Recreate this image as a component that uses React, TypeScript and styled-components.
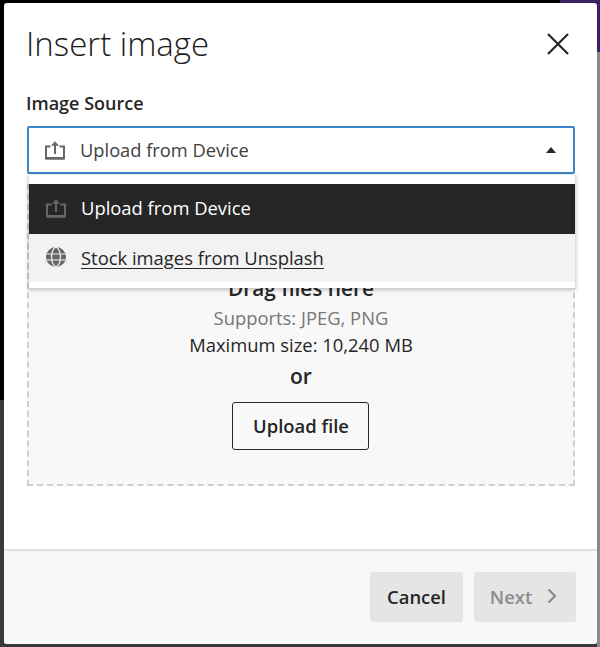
import React from "react";
import styled, { createGlobalStyle } from "styled-components";

const Global = createGlobalStyle`
  html, body { margin: 0; padding: 0; width: 600px; height: 647px; overflow: hidden; }
  body {
    font-family: "Open Sans", "Noto Sans", sans-serif;
    background:
      linear-gradient(#3d1f63, #3d1f63) 560px 0 / 40px 52px no-repeat,
      linear-gradient(#8a8a8a, #8a8a8a) 597px 52px / 3px 595px no-repeat,
      linear-gradient(#000, #000) 0 0 / 600px 400px no-repeat,
      #3a3a3a;
  }
  #root { width: 600px; height: 647px; }
`;

const Stage = styled.div`
  width: 600px;
  height: 647px;
  padding: 3px 3px 3px 4px;
  box-sizing: border-box;
`;

const Modal = styled.div`
  position: relative;
  height: 100%;
  background: #fff;
  border-radius: 3px;
  display: flex;
  flex-direction: column;
  overflow: hidden;
`;

const Header = styled.header`
  height: 80px;
  padding: 1px 26px 0 22px;
  display: flex;
  align-items: center;
  justify-content: space-between;
  box-sizing: border-box;
`;

const Title = styled.h2`
  margin: 0;
  font-size: 33px;
  line-height: 44px;
  font-weight: 300;
  color: #1c1c1c;
`;

const CloseButton = styled.button`
  width: 26px;
  height: 26px;
  border: 0;
  padding: 0;
  background: none;
  display: flex;
`;

const Body = styled.div`
  flex: 1;
  padding: 8px 22px 0 23px;
  display: flex;
  flex-direction: column;
`;

const Label = styled.label`
  font-size: 18px;
  line-height: 24px;
  font-weight: 600;
  color: #262626;
  margin: 0 0 11px -1px;
`;

const Select = styled.div`
  height: 48px;
  box-sizing: border-box;
  border: 2px solid #3d87c8;
  border-radius: 2px;
  display: flex;
  align-items: center;
  padding: 0 17px 0 15px;
  color: #404040;
  font-size: 18.3px;
`;

const SelectText = styled.span`
  margin: 0 0 2px 14px;
  flex: 1;
`;

const Caret = styled.span`
  width: 0;
  height: 0;
  border-left: 5px solid transparent;
  border-right: 5px solid transparent;
  border-bottom: 6px solid #262626;
`;

const Dropzone = styled.div`
  height: 302px;
  margin-top: 10px;
  box-sizing: border-box;
  border: 2px dashed #cfcfcf;
  background: #f8f8f8;
  display: flex;
  flex-direction: column;
  align-items: center;
  justify-content: flex-end;
  padding-bottom: 34px;
`;

const DragText = styled.div`
  font-size: 20.8px;
  line-height: 29px;
  font-weight: 600;
  color: #262626;
  margin-bottom: 1px;
`;

const Supports = styled.div`
  font-size: 18.4px;
  line-height: 27px;
  color: #767676;
`;

const MaxSize = styled.div`
  font-size: 18.4px;
  line-height: 28px;
  color: #262626;
`;

const Or = styled.div`
  font-size: 21px;
  line-height: 34px;
  font-weight: 600;
  color: #262626;
  margin-bottom: 9px;
`;

const UploadButton = styled.button`
  width: 137px;
  height: 48px;
  margin-right: 2px;
  border: 1px solid #262626;
  border-radius: 3px;
  background: #fff0;
  font: 600 18.4px "Open Sans", sans-serif;
  color: #262626;
  padding: 0 0 2px 2px;
`;

const Footer = styled.footer`
  height: 95px;
  box-sizing: border-box;
  border-top: 2px solid #e0e0e0;
  background: #f8f8f8;
  display: flex;
  justify-content: flex-end;
  align-items: flex-start;
  gap: 11px;
  padding: 21px 21px 0 0;
`;

const FooterButton = styled.button<{ $disabled?: boolean }>`
  height: 50px;
  width: ${(p) => (p.$disabled ? 102 : 93)}px;
  border: 0;
  border-radius: 3px;
  background: #e5e5e5;
  font: 600 18.4px "Open Sans", sans-serif;
  color: ${(p) => (p.$disabled ? "#8c8c8c" : "#262626")};
  display: flex;
  align-items: center;
  justify-content: center;
  gap: 15px;
  padding: 0 ${(p) => (p.$disabled ? 3 : 0)}px 2px 0;
`;

const Menu = styled.div`
  position: absolute;
  left: 25px;
  top: 172px;
  width: 546px;
  height: 113px;
  padding: 9px 0 5px;
  box-sizing: border-box;
  background: #fff;
  box-shadow: 0 1px 4px 1px rgba(0, 0, 0, 0.22);
`;

const MenuItem = styled.div<{ $active?: boolean }>`
  height: ${(p) => (p.$active ? 50 : 48)}px;
  box-sizing: border-box;
  display: flex;
  align-items: center;
  padding: 0 0 ${(p) => (p.$active ? 3 : 2)}px 16px;
  gap: 14px;
  font-size: 18.4px;
  background: ${(p) => (p.$active ? "#262626" : "#f2f2f2")};
  color: ${(p) => (p.$active ? "#fff" : "#262626")};
  text-decoration: ${(p) => (p.$active ? "none" : "underline")};
  text-underline-offset: 3px;
`;

const UploadIcon = () => (
  <svg width="22" height="22" viewBox="0 0 22 22" fill="none" stroke="#666" strokeWidth="2">
    <path d="M6.5 7.5H2v12h18v-12h-4.5" />
    <path d="M2 19.2h18" strokeWidth="2.6" />
    <path d="M11 15V4" />
    <path d="M7 6.8L11 2.2l4 4.6z" fill="#666" stroke="none" />
  </svg>
);

const GlobeIcon = () => (
  <svg width="22" height="22" viewBox="0 0 22 22" fill="none">
    <circle cx="11" cy="11" r="10" fill="#666" />
    <g stroke="#f2f2f2" strokeWidth="1.2">
      <path d="M1.5 8h19M1.5 14h19" />
      <ellipse cx="11" cy="11" rx="4.4" ry="9.6" />
    </g>
  </svg>
);

export default function App() {
  return (
    <>
      <Global />
      <Stage>
        <Modal>
          <Header>
            <Title>Insert image</Title>
            <CloseButton aria-label="Close">
              <svg width="26" height="26" viewBox="0 0 26 26" fill="none" stroke="#262626" strokeWidth="2.2">
                <path d="M3 3l20 20M23 3L3 23" />
              </svg>
            </CloseButton>
          </Header>
          <Body>
            <Label>Image Source</Label>
            <Select>
              <UploadIcon />
              <SelectText>Upload from Device</SelectText>
              <Caret />
            </Select>
            <Dropzone>
              <DragText>Drag files here</DragText>
              <Supports>Supports: JPEG, PNG</Supports>
              <MaxSize>Maximum size: 10,240 MB</MaxSize>
              <Or>or</Or>
              <UploadButton>Upload file</UploadButton>
            </Dropzone>
          </Body>
          <Footer>
            <FooterButton>Cancel</FooterButton>
            <FooterButton $disabled>
              Next
              <svg width="10" height="16" viewBox="0 0 10 16" fill="none" stroke="#8c8c8c" strokeWidth="2.2">
                <path d="M1.5 1.5L8 8l-6.5 6.5" />
              </svg>
            </FooterButton>
          </Footer>
          <Menu>
            <MenuItem $active>
              <UploadIcon />
              Upload from Device
            </MenuItem>
            <MenuItem>
              <GlobeIcon />
              Stock images from Unsplash
            </MenuItem>
          </Menu>
        </Modal>
      </Stage>
    </>
  );
}
